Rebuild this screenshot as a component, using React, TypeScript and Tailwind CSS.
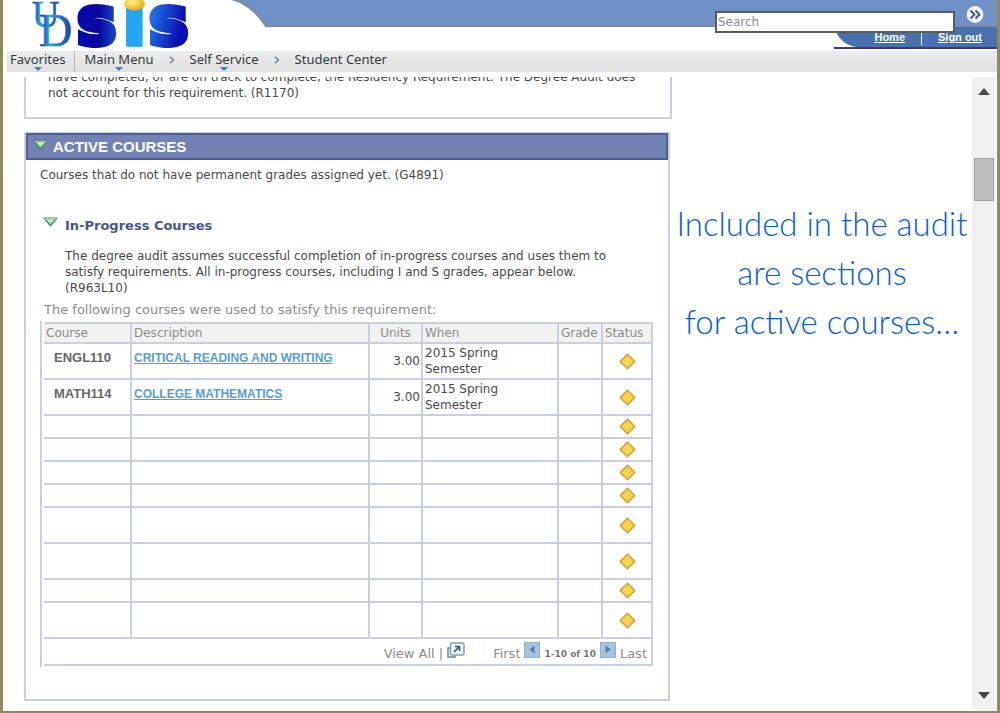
import React from "react";

type Course = {
  code?: string;
  title?: string;
  units?: string;
  when?: string;
  tall: boolean;
};

const courses: Course[] = [
  { code: "ENGL110", title: "CRITICAL READING AND WRITING", units: "3.00", when: "2015 Spring Semester", tall: true },
  { code: "MATH114", title: "COLLEGE MATHEMATICS", units: "3.00", when: "2015 Spring Semester", tall: true },
  { tall: false },
  { tall: false },
  { tall: false },
  { tall: false },
  { tall: true },
  { tall: true },
  { tall: false },
  { tall: true },
];

function Logo() {
  return (
    <svg className="block h-[51px] w-[265px] shrink-0" viewBox="0 0 265 51" role="img" aria-label="UD SIS">
      <defs>
        <linearGradient id="mark" x1="0" x2="1" y1="0" y2="0">
          <stop offset="0" stopColor="#1414a8" />
          <stop offset="0.3" stopColor="#2aa6e0" />
          <stop offset="1" stopColor="#1a3fa0" />
        </linearGradient>
        <linearGradient id="first" gradientUnits="userSpaceOnUse" x1="66" x2="120" y1="28" y2="28">
          <stop offset="0" stopColor="#0508b4" />
          <stop offset="0.5" stopColor="#0a08a0" />
          <stop offset="1" stopColor="#1c6fd8" />
        </linearGradient>
        <linearGradient id="last" gradientUnits="userSpaceOnUse" x1="142" x2="196" y1="20" y2="34">
          <stop offset="0" stopColor="#2479e8" />
          <stop offset="0.6" stopColor="#0a10b4" />
          <stop offset="1" stopColor="#0a08b8" />
        </linearGradient>
        <radialGradient id="sun" cx="0.4" cy="0.35" r="0.7">
          <stop offset="0" stopColor="#fff3a0" />
          <stop offset="0.5" stopColor="#f6cf38" />
          <stop offset="1" stopColor="#e0a020" />
        </radialGradient>
      </defs>
      <rect x="200" width="65" height="26" fill="#6f90c8" />
      <path d="M0 0H225C241 4 252 14 260 27H265V51H0Z" fill="#fff" />
      <path d="M226 -1C242 4 252 14 260 26.500H265" fill="none" stroke="#8b8798" strokeWidth="1.500" />
      <g fontFamily="'Liberation Serif', serif" fill="url(#mark)" stroke="url(#mark)" strokeWidth="0.600">
        <text x="26" y="27" fontSize="38">U</text>
        <text x="33" y="46" fontSize="46">D</text>
      </g>
      <text y="44" fontFamily="'DejaVu Sans', sans-serif" fontWeight="700" fontSize="66" strokeLinejoin="miter">
        <tspan x="71" fill="url(#first)" stroke="url(#first)" strokeWidth="6">s</tspan>
        <tspan x="117" fill="#22a7f6" stroke="#22a7f6" strokeWidth="5">i</tspan>
        <tspan x="143" fill="url(#last)" stroke="url(#last)" strokeWidth="6">s</tspan>
      </text>
      <path d="M115 0H143V6H138V8H119V6H115Z" fill="#fff" />
      <ellipse cx="128.500" cy="4" rx="10.500" ry="6.500" fill="url(#sun)" />
    </svg>
  );
}

function Diamond() {
  return (
    <svg className="mx-auto block size-[17px]" viewBox="0 0 17 17" role="img" aria-label="In progress">
      <path d="M8.500 1.200L15.800 8.500L8.500 15.800L1.200 8.500Z" fill="#f5d548" stroke="#d59a3c" strokeWidth="1.500" strokeLinejoin="round" />
    </svg>
  );
}

function Collapse() {
  return (
    <svg className="block h-[10px] w-[15px]" viewBox="0 0 15 10" aria-hidden="true">
      <path d="M1 1H14L7.500 8.800Z" fill="#7fe67f" stroke="#4c7a5c" strokeWidth="1.200" strokeLinejoin="round" />
      <path d="M1 1H14L12.500 2.600H2.500Z" fill="#b9c4bb" />
      <path d="M4 3H11L9.500 4.600H5.500Z" fill="#d6ffd0" />
    </svg>
  );
}

function Crumb({ label, menu }: { label: string; menu?: boolean }) {
  return (
    <a href="#" className="flex flex-col items-center text-[#333a44]">
      {label}
      {menu && (
        <svg className="block h-[4px] w-[8px]" viewBox="0 0 8 4" aria-hidden="true">
          <path d="M0 0H8L4 4Z" fill="#3f7fc4" />
        </svg>
      )}
    </a>
  );
}

function CrumbArrow() {
  return (
    <svg className="mx-[15px] mt-[5px] h-[8px] w-[6px]" viewBox="0 0 6 8" aria-hidden="true">
      <path d="M1 0.800L4.500 4L1 7.200" fill="none" stroke="#6b7f96" strokeWidth="1.300" />
    </svg>
  );
}

function PageButton({ label, d }: { label: string; d: string }) {
  return (
    <button type="button" aria-label={label} className="mb-1 size-4 border border-[#8fb0cc] bg-[#a5c3dc]">
      <svg className="mx-auto block h-[9px] w-[6px]" viewBox="0 0 6 9" aria-hidden="true">
        <path d={d} fill="#4e81b0" />
      </svg>
    </button>
  );
}

function Header() {
  return (
    <header className="relative flex">
      <div className="shrink-0 pl-[3px]">
        <Logo />
      </div>
      <div className="flex min-w-0 flex-1 flex-col">
        <div className="h-[27px] border-b-2 border-[#8884a0] bg-[#6f90c8]" />
        <div className="flex h-[22px] justify-end">
          <div className="flex h-full items-stretch border-b-2 border-[#3d3a80] bg-[#4a70b0] font-['Liberation_Sans',sans-serif] text-[11px] leading-5 font-bold">
            <svg className="block h-[20px] w-[22px]" viewBox="0 0 22 20" aria-hidden="true">
              <path d="M0 0C4 12 11 18 22 20H0Z" fill="#fff" />
            </svg>
            <a href="#" className="ml-[18px] text-white underline">Home</a>
            <span className="mx-4 my-[2px] w-px bg-white" />
            <a href="#" className="mr-[15px] text-white underline">Sign out</a>
          </div>
        </div>
      </div>
      <form className="absolute top-[5px] right-3 flex items-start gap-[10px]">
        <input
          type="text"
          aria-label="Search"
          placeholder="Search"
          className="mt-[6px] h-[22px] w-[240px] border-2 border-[#5a5a5a] bg-white px-px font-['DejaVu_Sans',sans-serif] text-xs text-gray-700 outline-none placeholder:text-[#7f8c99]"
        />
        <button type="submit" aria-label="Go" className="block">
          <svg className="block size-[20px]" viewBox="0 0 20 20" aria-hidden="true">
            <circle cx="10" cy="9.500" r="9" fill="#eef3fb" stroke="#7c8db4" strokeWidth="1.200" />
            <path d="M5.500 5.500L9.500 9.500L5.500 13.500M10.500 5.500L14.500 9.500L10.500 13.500" fill="none" stroke="#3d4f96" strokeWidth="1.800" />
          </svg>
        </button>
      </form>
    </header>
  );
}

function CourseTable() {
  const cell = "border-r-2 border-b-2 border-[#c8cfe2] p-0";
  const head = "border-y-2 border-r-2 border-[#c8cfe2] bg-[#f1f1f2] p-0 px-[2px] font-normal text-[#8c8c8c]";
  return (
    <div className="mr-[15px] border-l-2 border-[#c8cfe2] py-px pl-[2px]">
      <table className="w-full table-fixed border-separate border-spacing-0 text-left text-xs leading-4">
        <colgroup>
          <col className="w-[88px]" />
          <col />
          <col className="w-[53px]" />
          <col className="w-[136px]" />
          <col className="w-[44px]" />
          <col className="w-[50px]" />
        </colgroup>
        <thead>
          <tr className="h-[22px]">
            <th className={head}>Course</th>
            <th className={head}>Description</th>
            <th className={`${head} text-center`}>Units</th>
            <th className={head}>When</th>
            <th className={head}>Grade</th>
            <th className={head}>Status</th>
          </tr>
        </thead>
        <tbody>
          {courses.map((c, i) => (
            <tr key={i} className={c.tall ? "h-[36px]" : "h-[23px]"}>
              <td className={`${cell} pl-[10px] align-top font-['Liberation_Sans',sans-serif] text-[13px] text-[#666]`}>
                {c.code && <div className="pt-[6px] font-bold">{c.code}</div>}
              </td>
              <td className={`${cell} pl-[2px] align-top font-['Liberation_Sans',sans-serif] text-xs`}>
                {c.title && (
                  <div className="pt-[6px]">
                    <a href="#" className="font-bold whitespace-nowrap text-[#5b9bd5] underline">{c.title}</a>
                  </div>
                )}
              </td>
              <td className={`${cell} pr-px text-right`}>{c.units}</td>
              <td className={cell}>
                {c.when && <div className="w-[90px] pl-[2px]">{c.when}</div>}
              </td>
              <td className={cell} />
              <td className={cell}>
                <Diamond />
              </td>
            </tr>
          ))}
        </tbody>
        <tfoot>
          <tr className="h-[27px]">
            <td colSpan={6} className={cell}>
              <div className="flex items-end justify-end pr-1 text-[13px] text-[#8c8c8c]">
                <a href="#">View All</a>
                <span className="mx-1">|</span>
                <button type="button" aria-label="Open in new window" className="mr-7 mb-1">
                  <svg className="block h-[16px] w-[18px]" viewBox="0 0 18 16" aria-hidden="true">
                    <path d="M3 6H1V15H8V13" fill="none" stroke="#6d7f90" strokeWidth="1.500" />
                    <rect x="3.500" y="1" width="13.500" height="12" rx="1.500" fill="#eef5fb" stroke="#7ba0c2" strokeWidth="1.500" />
                    <path d="M7 10L12 5M8 4.500H12.500V9" fill="none" stroke="#34506e" strokeWidth="1.500" />
                  </svg>
                </button>
                <span className="mr-1">First</span>
                <PageButton label="Previous page" d="M5.500 0.500V8.500L0.500 4.500Z" />
                <span className="mx-1 text-[9px] font-bold text-[#777]">1-10 of 10</span>
                <PageButton label="Next page" d="M0.500 0.500V8.500L5.500 4.500Z" />
                <span className="ml-1">Last</span>
              </div>
            </td>
          </tr>
        </tfoot>
      </table>
    </div>
  );
}

function ScrollBar() {
  return (
    <div className="mr-px flex flex-col items-center bg-[#f0f0f0]">
      <button type="button" aria-label="Scroll up" className="flex h-7 items-center">
        <svg className="block h-[7px] w-[12px]" viewBox="0 0 12 7" aria-hidden="true">
          <path d="M0 7L6 0L12 7Z" fill="#484848" />
        </svg>
      </button>
      <div className="mt-[53px] h-[43px] w-[20px] border border-[#a4a4a4] bg-[#bdbdbd]" />
      <div className="flex-1" />
      <button type="button" aria-label="Scroll down" className="flex h-7 items-center">
        <svg className="block h-[7px] w-[12px]" viewBox="0 0 12 7" aria-hidden="true">
          <path d="M0 0L6 7L12 0Z" fill="#484848" />
        </svg>
      </button>
    </div>
  );
}

export default function App() {
  return (
    <div className="flex min-h-screen flex-col border-x-[3px] border-b-2 border-[#8f8a5c] bg-white font-['DejaVu_Sans',sans-serif] text-xs leading-4 text-[#4a4a4a]">
      <Header />
      <nav className="ml-1 flex h-[21px] items-start bg-linear-to-b from-[#ececec] to-[#e0e0e0] pl-[3px] font-['Noto_Sans',sans-serif] text-[13px] leading-4">
        <Crumb label="Favorites" menu />
        <span className="mx-[9px] h-full w-px bg-[#b8b8b8]" />
        <Crumb label="Main Menu" menu />
        <CrumbArrow />
        <Crumb label="Self Service" menu />
        <CrumbArrow />
        <Crumb label="Student Center" />
      </nav>
      <main className="mt-[5px] mb-[2px] grid flex-1 grid-cols-[minmax(0,648fr)_minmax(0,300fr)_25px] overflow-hidden pl-[21px]">
        <div>
          <section className="-mt-2 border-x-2 border-b-2 border-[#c8cfe2] pb-4 pl-[22px]">
            <p className="max-w-[600px]">
              have completed, or are on track to complete, the Residency Requirement. The Degree Audit does not account for this requirement. (R1170)
            </p>
          </section>
          <section className="mt-[13px] mr-0.5 border-2 border-t border-[#c8cfe2] pb-8">
            <h2 className="flex h-[27px] items-center border-2 border-[#4f5f96] bg-[#7382b5] pl-[5px] font-['Liberation_Sans',sans-serif] text-[15px] font-bold text-white">
              <button type="button" aria-label="Collapse active courses" className="mr-[5px] mb-1">
                <Collapse />
              </button>
              ACTIVE COURSES
            </h2>
            <div className="pl-[14px]">
              <p className="pt-[7px]">Courses that do not have permanent grades assigned yet. (G4891)</p>
              <h3 className="flex items-center pt-[34px] pl-[3px] text-[13px] leading-4 font-bold text-[#46558c]">
                <button type="button" aria-label="Collapse in-progress courses" className="mr-[7px] mb-2">
                  <Collapse />
                </button>
                In-Progress Courses
              </h3>
              <p className="max-w-[590px] pt-[13px] pl-[25px]">
                The degree audit assumes successful completion of in-progress courses and uses them to satisfy requirements. All in-progress courses, including I and S grades, appear below. (R963L10)
              </p>
              <p className="pt-[6px] pb-[3px] pl-[4px] text-[13px] text-[#8c8c8c]">The following courses were used to satisfy this requirement:</p>
              <CourseTable />
            </div>
          </section>
        </div>
        <aside className="pt-[122px] text-center font-['Papyrus','Lato',sans-serif] text-[33px] leading-[49px] font-light whitespace-nowrap text-[#0a5cd8]">
          <p>Included in the audit</p>
          <p>are sections</p>
          <p>for active courses…</p>
        </aside>
        <ScrollBar />
      </main>
    </div>
  );
}
